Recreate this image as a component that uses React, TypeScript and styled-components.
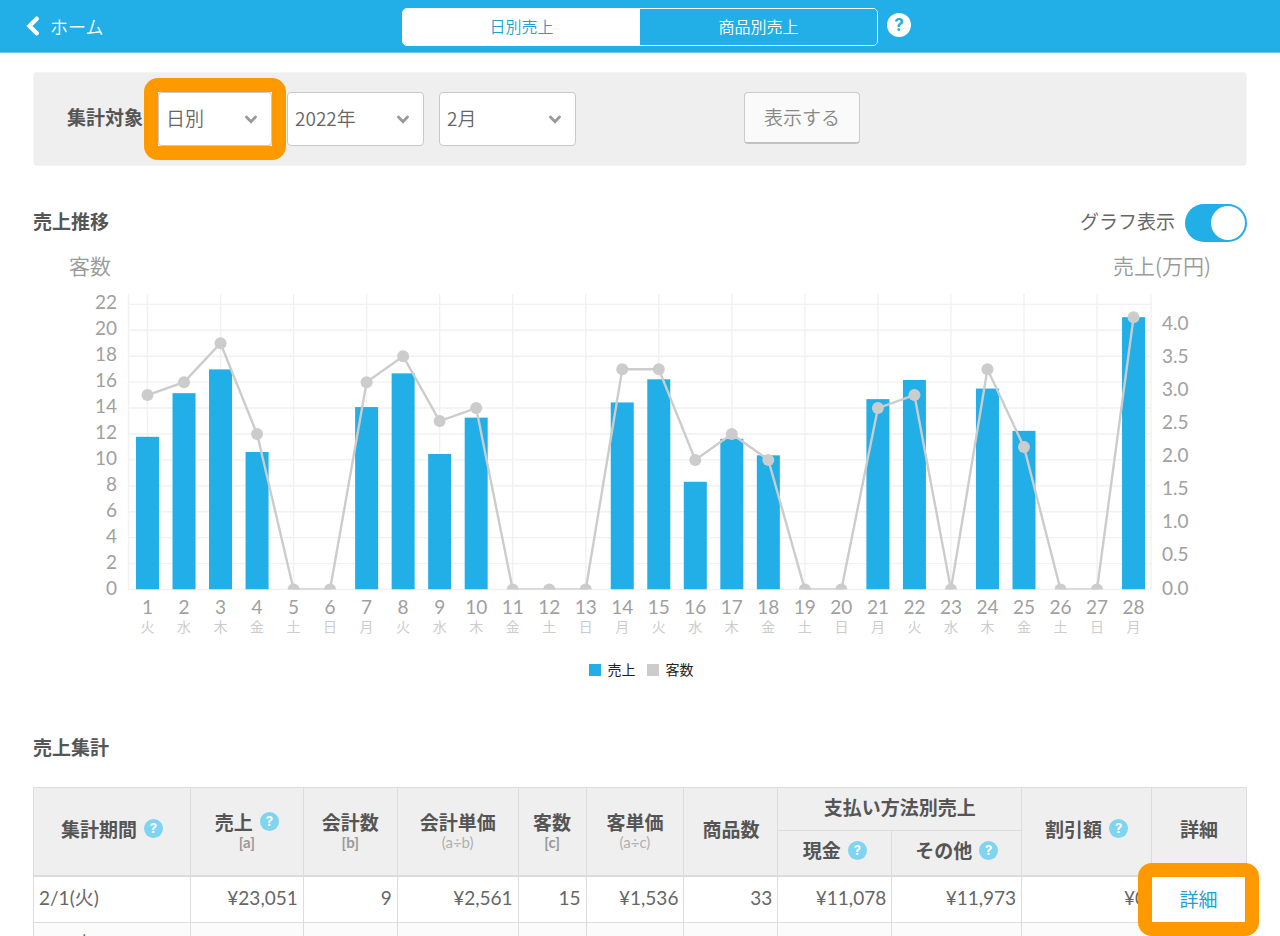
import React, { useState } from "react";
import styled, { createGlobalStyle, css } from "styled-components";

const BLUE = "#22aee6";
const ORANGE = "#ff9900";
const LINE = "#dcdcdc";

const GlobalStyle = createGlobalStyle`
  *, *::before, *::after { box-sizing: border-box; }
  body {
    margin: 0;
    background: #fff;
    color: #555;
    font-family: Lato, "Noto Sans CJK JP", sans-serif;
    font-size: 19px;
  }
  button, select { font-family: inherit; }
`;

const Shell = styled.div`
  display: flex;
  flex-direction: column;
  height: 100vh;
  overflow: hidden;
`;

const TopBar = styled.header`
  flex: none;
  display: grid;
  grid-template-columns: 1fr minmax(0, 476px) 1fr;
  align-items: start;
  height: 53px;
  padding: 8px 25px 0;
  background: ${BLUE};
  border-bottom: 1px solid #6accf2;
  color: #fff;
`;

const HomeLink = styled.a`
  display: flex;
  align-items: center;
  gap: 9px;
  height: 36px;
  color: #fff;
  font-size: 18px;
  font-weight: 350;
  text-decoration: none;
`;

const Tabs = styled.nav`
  display: grid;
  grid-template-columns: 1fr 1fr;
  height: 38px;
  border: 1px solid #fff;
  border-radius: 5px;
  overflow: hidden;
`;

const Tab = styled.button<{ $active: boolean }>`
  border: 0;
  padding: 0;
  font-size: 16px;
  line-height: 24px;
  font-weight: 350;
  color: ${(p) => (p.$active ? "#1f9fd4" : "#fff")};
  background: ${(p) => (p.$active ? "#fff" : BLUE)};
`;

const HelpDot = styled.button<{ $large?: boolean }>`
  flex: none;
  display: inline-flex;
  align-items: center;
  justify-content: center;
  padding: 0;
  border: 0;
  border-radius: 50%;
  font-family: Inter, sans-serif;
  font-weight: 700;
  ${(p) =>
    p.$large
      ? css`
          width: 24px;
          height: 24px;
          margin: 5px 0 0 9px;
          font-size: 17px;
          line-height: 24px;
          color: ${BLUE};
          background: #fff;
        `
      : css`
          width: 19px;
          height: 19px;
          margin-bottom: 2px;
          font-size: 13px;
          line-height: 19px;
          color: #fff;
          background: #7fd4f2;
        `}
`;

const Main = styled.main`
  flex: 1;
  min-height: 0;
  overflow: hidden auto;
  scrollbar-width: none;
  padding: 19px 33px;
`;

const FilterBar = styled.form`
  display: flex;
  align-items: flex-start;
  gap: 15px;
  height: 94px;
  padding: 19px 33px;
  border: 1px solid #f4f4f4;
  border-radius: 4px;
  background: #efefef;
`;

const FilterLabel = styled.label`
  flex: none;
  line-height: 52px;
  font-weight: 700;
  white-space: nowrap;
`;

const highlight = css`
  &::after {
    content: "";
    position: absolute;
    inset: -14px;
    z-index: 1;
    border: 14px solid ${ORANGE};
    border-radius: 14px;
    pointer-events: none;
  }
`;

const SelectBox = styled.span<{ $width: number; $marked?: boolean }>`
  position: relative;
  flex: none;
  display: flex;
  width: ${(p) => p.$width}px;
  ${(p) => p.$marked && highlight}
  svg {
    position: absolute;
    right: 15px;
    top: 23px;
    pointer-events: none;
  }
`;

const Select = styled.select`
  appearance: none;
  width: 100%;
  height: 54px;
  padding: 0 32px 4px 7px;
  border: 1px solid #c8c8c8;
  border-radius: 4px;
  background: #fff;
  color: #666;
  font-family: "Noto Sans CJK JP", sans-serif;
  font-size: 19px;
  font-weight: 350;
`;

const ShowButton = styled.button`
  width: 116px;
  height: 52px;
  margin-left: 153px;
  padding: 0 0 3px;
  border: 1px solid #ccc;
  border-bottom: 2px solid #c2c2c2;
  border-radius: 4px;
  background: #fafafa;
  color: #888;
  font-size: 19px;
  font-weight: 350;
`;

const SectionHead = styled.div<{ $top: number }>`
  display: flex;
  justify-content: space-between;
  align-items: center;
  height: 38px;
  margin-top: ${(p) => p.$top}px;
`;

const SectionTitle = styled.h2`
  margin: 0;
  padding-bottom: 2px;
  font-size: 19px;
  line-height: 36px;
  font-weight: 700;
`;

const ToggleLabel = styled.label`
  display: flex;
  align-items: center;
  gap: 10px;
  line-height: 34px;
  color: #666;
`;

const ToggleText = styled.span`
  padding-bottom: 3px;
`;

const Toggle = styled.input`
  appearance: none;
  flex: none;
  display: flex;
  width: 62px;
  height: 38px;
  margin: 0;
  padding: 2px;
  border-radius: 19px;
  background: #ccc;
  &::before {
    content: "";
    width: 34px;
    height: 34px;
    border-radius: 50%;
    background: #fff;
  }
  &:checked { background: ${BLUE}; justify-content: flex-end; }
`;

const ChartSvg = styled.svg`
  display: block;
  width: 100%;
  height: auto;
  font-size: 19px;
`;

const Legend = styled.ul`
  display: flex;
  justify-content: center;
  gap: 11px;
  margin: 12px 0 0;
  padding: 0 0 0 2px;
  list-style: none;
  font-size: 14px;
  line-height: 24px;
  color: #222;
`;

const LegendItem = styled.li<{ $color: string }>`
  display: flex;
  align-items: center;
  gap: 7px;
  &::before {
    content: "";
    width: 12px;
    height: 12px;
    background: ${(p) => p.$color};
  }
`;

const SummaryTable = styled.table`
  width: 100%;
  margin-top: 19px;
  table-layout: fixed;
  border-collapse: collapse;
`;

const HeadCell = styled.th`
  padding: 0;
  border: 1px solid ${LINE};
  background: #efefef;
  font-weight: 700;
  line-height: 24px;
  white-space: nowrap;
`;

const HeadRow = styled.tr<{ $height: number }>`
  height: ${(p) => p.$height}px;
`;

const HeadText = styled.span`
  display: flex;
  align-items: center;
  justify-content: center;
  gap: 7px;
  padding-bottom: 3px;
`;

const HeadNote = styled.small<{ $strong?: boolean }>`
  display: block;
  margin-top: -6px;
  font-size: 15px;
  line-height: 20px;
  font-weight: ${(p) => (p.$strong ? 700 : 400)};
  color: ${(p) => (p.$strong ? "#999" : "#b0b0b0")};
`;

const Body = styled.tbody`
  border-top: 2px solid ${LINE};
`;

const Row = styled.tr`
  height: 46px;
  &:nth-child(even) { background: #fbfbfb; }
`;

const Cell = styled.td<{ $left?: boolean }>`
  padding: 0 5px 2px;
  border: 1px solid ${LINE};
  text-align: ${(p) => (p.$left ? "left" : "right")};
  line-height: 24px;
  color: #666;
  white-space: nowrap;
`;

const DetailCell = styled(Cell)`
  padding: 0;
  text-align: center;
`;

const DetailLink = styled.a<{ $marked?: boolean }>`
  position: relative;
  display: block;
  margin-right: 1px;
  line-height: 45px;
  color: #1f9fd4;
  text-decoration: none;
  ${(p) => p.$marked && highlight}
`;

const guests = [15, 16, 19, 12, 0, 0, 16, 18, 13, 14, 0, 0, 0, 17, 17, 10, 12, 10, 0, 0, 14, 15, 0, 17, 11, 0, 0, 21];
const sales = [
  2.31, 2.97, 3.33, 2.08, 0, 0, 2.76, 3.27, 2.05, 2.6, 0, 0, 0, 2.83, 3.18, 1.63, 2.28, 2.03, 0, 0, 2.88, 3.17, 0,
  3.04, 2.4, 0, 0, 4.12,
];
const weekdays = ["火", "水", "木", "金", "土", "日", "月"];

const BASE = 347.5;
const LEFT = 95;
const RIGHT = 1118;
const dayX = (i: number) => 114.5 + i * 36.52;
const guestY = (v: number) => BASE - v * 12.96;
const salesY = (v: number) => BASE - v * 66.1;

function Chart() {
  return (
    <ChartSvg viewBox="0 0 1214 404" role="img" aria-label="売上推移">
      <defs>
        <clipPath id="plot">
          <rect x={LEFT} y="40" width={RIGHT - LEFT} height={BASE - 40} />
        </clipPath>
      </defs>
      <g fill="#999" fontSize="21" fontWeight="350" fontFamily="'Noto Sans CJK JP', sans-serif">
        <text x="36" y="32">客数</text>
        <text x="1178" y="32" textAnchor="end">売上(万円)</text>
      </g>
      <g stroke="#f1f1f1" strokeWidth="1.4">
        {Array.from({ length: 12 }, (_, i) => (
          <line key={i} x1={LEFT} x2={RIGHT} y1={guestY(i * 2)} y2={guestY(i * 2)} />
        ))}
        {guests.map((_, i) => i % 2 === 0 && <line key={i} x1={dayX(i)} x2={dayX(i)} y1="52" y2={BASE} />)}
        <line x1={LEFT + 0.5} x2={LEFT + 0.5} y1="52" y2={BASE} />
        <line x1={RIGHT} x2={RIGHT} y1="52" y2={BASE} />
      </g>
      <g fill="#a0a0a0">
        {Array.from({ length: 12 }, (_, i) => (
          <text key={i} x="84" y={guestY(i * 2) + 5} textAnchor="end">{i * 2}</text>
        ))}
        {Array.from({ length: 9 }, (_, i) => (
          <text key={i} x="1129" y={salesY(i / 2) + 5}>{(i / 2).toFixed(1)}</text>
        ))}
        {guests.map((_, i) => (
          <text key={i} x={dayX(i)} y="372" textAnchor="middle">{i + 1}</text>
        ))}
      </g>
      <g fill="#ccc" fontSize="14" textAnchor="middle">
        {guests.map((_, i) => (
          <text key={i} x={dayX(i)} y="390">{weekdays[i % 7]}</text>
        ))}
      </g>
      <g clipPath="url(#plot)">
        {sales.map((v, i) => (
          <rect key={i} x={dayX(i) - 11.5} y={salesY(v)} width="23" height={BASE - salesY(v)} fill={BLUE} />
        ))}
        <polyline
          points={guests.map((v, i) => `${dayX(i)},${guestY(v)}`).join(" ")}
          fill="none"
          stroke="#ccc"
          strokeWidth="2.4"
        />
        {guests.map((v, i) => (
          <circle key={i} cx={dayX(i)} cy={guestY(v)} r="6" fill="#ccc" />
        ))}
      </g>
    </ChartSvg>
  );
}

const Chevron = () => (
  <svg width="12" height="9" viewBox="0 0 12 9" aria-hidden="true">
    <path d="M1.5 2 L6 6.8 L10.5 2" fill="none" stroke="#999" strokeWidth="2.8" strokeLinecap="round" />
  </svg>
);

const Help = ({ large }: { large?: boolean }) => (
  <HelpDot type="button" $large={large}>?</HelpDot>
);

const columns = [157, 113, 94, 121, 68, 98, 94, 114, 130, 130, 95];

export default function App() {
  const [tab, setTab] = useState(0);
  const [graph, setGraph] = useState(true);
  return (
    <Shell>
      <GlobalStyle />
      <TopBar>
        <HomeLink href="#">
          <svg width="16" height="20" viewBox="0 0 16 20" aria-hidden="true">
            <path d="M11.7 2.7 L4.5 10 L11.7 17.3" fill="none" stroke="#fff" strokeWidth="4.4" strokeLinecap="round" />
          </svg>
          ホーム
        </HomeLink>
        <Tabs>
          <Tab type="button" $active={tab === 0} onClick={() => setTab(0)}>日別売上</Tab>
          <Tab type="button" $active={tab === 1} onClick={() => setTab(1)}>商品別売上</Tab>
        </Tabs>
        <div>
          <Help large />
        </div>
      </TopBar>
      <Main>
        <FilterBar onSubmit={(e) => e.preventDefault()}>
          <FilterLabel htmlFor="unit">集計対象</FilterLabel>
          <SelectBox $width={114} $marked>
            <Select id="unit"><option>日別</option></Select>
            <Chevron />
          </SelectBox>
          <SelectBox $width={137}>
            <Select aria-label="年"><option>2022年</option></Select>
            <Chevron />
          </SelectBox>
          <SelectBox $width={137}>
            <Select aria-label="月"><option>2月</option></Select>
            <Chevron />
          </SelectBox>
          <ShowButton>表示する</ShowButton>
        </FilterBar>

        <SectionHead $top={38}>
          <SectionTitle>売上推移</SectionTitle>
          <ToggleLabel>
            <ToggleText>グラフ表示</ToggleText>
            <Toggle type="checkbox" checked={graph} onChange={() => setGraph(!graph)} />
          </ToggleLabel>
        </SectionHead>
        {graph && (
          <>
            <Chart />
            <Legend>
              <LegendItem $color={BLUE}>売上</LegendItem>
              <LegendItem $color="#ccc">客数</LegendItem>
            </Legend>
          </>
        )}

        <SectionHead $top={48}>
          <SectionTitle>売上集計</SectionTitle>
        </SectionHead>
        <SummaryTable>
          <colgroup>
            {columns.map((w, i) => (
              <col key={i} style={{ width: `${(w / 1214) * 100}%` }} />
            ))}
          </colgroup>
          <thead>
            <HeadRow $height={43}>
              <HeadCell rowSpan={2}><HeadText>集計期間<Help /></HeadText></HeadCell>
              <HeadCell rowSpan={2}><HeadText>売上<Help /></HeadText><HeadNote $strong>[a]</HeadNote></HeadCell>
              <HeadCell rowSpan={2}><HeadText>会計数</HeadText><HeadNote $strong>[b]</HeadNote></HeadCell>
              <HeadCell rowSpan={2}><HeadText>会計単価</HeadText><HeadNote>(a÷b)</HeadNote></HeadCell>
              <HeadCell rowSpan={2}><HeadText>客数</HeadText><HeadNote $strong>[c]</HeadNote></HeadCell>
              <HeadCell rowSpan={2}><HeadText>客単価</HeadText><HeadNote>(a÷c)</HeadNote></HeadCell>
              <HeadCell rowSpan={2}><HeadText>商品数</HeadText></HeadCell>
              <HeadCell colSpan={2}><HeadText>支払い方法別売上</HeadText></HeadCell>
              <HeadCell rowSpan={2}><HeadText>割引額<Help /></HeadText></HeadCell>
              <HeadCell rowSpan={2}><HeadText>詳細</HeadText></HeadCell>
            </HeadRow>
            <HeadRow $height={45}>
              <HeadCell><HeadText>現金<Help /></HeadText></HeadCell>
              <HeadCell><HeadText>その他<Help /></HeadText></HeadCell>
            </HeadRow>
          </thead>
          <Body>
            <Row>
              <Cell $left>2/1(火)</Cell>
              <Cell>¥23,051</Cell>
              <Cell>9</Cell>
              <Cell>¥2,561</Cell>
              <Cell>15</Cell>
              <Cell>¥1,536</Cell>
              <Cell>33</Cell>
              <Cell>¥11,078</Cell>
              <Cell>¥11,973</Cell>
              <Cell>¥0</Cell>
              <DetailCell><DetailLink href="#" $marked>詳細</DetailLink></DetailCell>
            </Row>
            <Row>
              <Cell $left>2/2(水)</Cell>
              {columns.slice(1).map((_, i) => <Cell key={i} />)}
            </Row>
          </Body>
        </SummaryTable>
      </Main>
    </Shell>
  );
}
